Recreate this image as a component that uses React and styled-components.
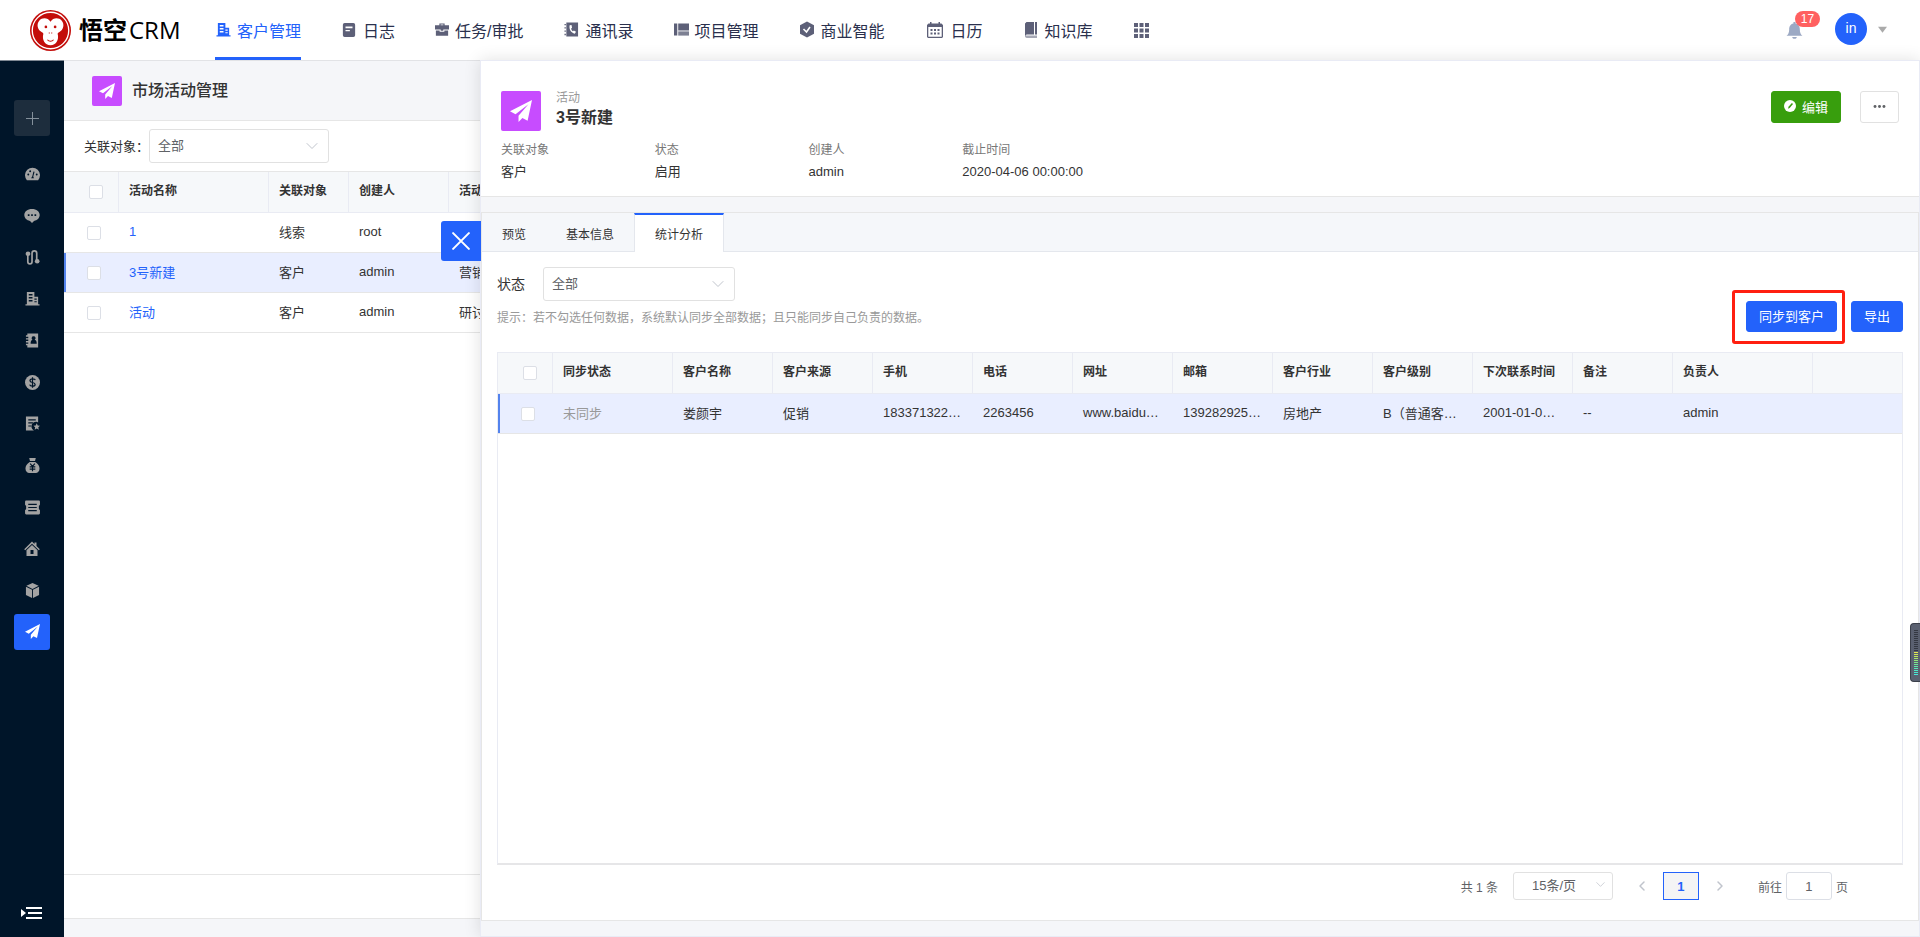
import React from 'react';
import styled, { createGlobalStyle } from 'styled-components';

const BLUE = '#2362fb';

const GlobalStyle = createGlobalStyle`
    * { box-sizing: border-box; }
    body {
        margin: 0;
        background: #f5f6f9;
        color: #333;
        font-family: "Liberation Sans", "Noto Sans CJK SC", sans-serif;
        font-size: 13px;
    }
    button, input, select { font-family: inherit; margin: 0; }
    button { cursor: pointer; }
    a { text-decoration: none; }
`;

const Page = styled.div`
    display: flex;
    flex-direction: column;
    height: 100vh;
    min-width: 1200px;
    position: relative;
    overflow: hidden;
`;

const TopBar = styled.header`
    flex: none;
    display: flex;
    align-items: stretch;
    height: 60px;
    padding: 0 33px 0 30px;
    background: #fff;
`;

const Brand = styled.a`
    display: flex;
    align-items: center;
    gap: 8px;
    width: 185px;
    color: #000;
    font-family: "Open Sans", "Noto Sans CJK SC", sans-serif;
    font-size: 24px;
    line-height: 58px;
    b {
        margin-right: 2px;
        font-weight: 700;
    }
`;

const MainNav = styled.nav`
    display: flex;
    gap: 40px;
    flex: 1;
`;

const NavLink = styled.a`
    display: flex;
    align-items: center;
    gap: 6px;
    color: ${props => props.$active ? BLUE : '#2a304d'};
    border-bottom: 3px solid ${props => props.$active ? BLUE : 'transparent'};
    padding-top: 2px;
    font-size: 16px;
    white-space: nowrap;
    svg { color: ${props => props.$active ? BLUE : '#5d6078'}; }
`;

const NavIcon = styled.span`
    display: flex;
    justify-content: center;
    width: ${props => props.$width}px;
`;

const UserArea = styled.div`
    display: flex;
    align-items: center;
`;

const BellButton = styled.button`
    position: relative;
    display: flex;
    padding: 0;
    border: 0;
    background: none;
    color: #9ca9c4;
    margin-right: 32px;
`;

const Badge = styled.span`
    position: absolute;
    left: 9px;
    bottom: 12px;
    min-width: 25px;
    height: 16px;
    border-radius: 8px;
    background: #ff6060;
    color: #fff;
    font-size: 12px;
    line-height: 16px;
    text-align: center;
`;

const Avatar = styled.button`
    display: flex;
    align-items: center;
    gap: 11px;
    padding: 0 0 2px;
    border: 0;
    background: none;
    color: #aaa;
    span {
        width: 32px;
        height: 32px;
        border-radius: 50%;
        background: ${BLUE};
        color: #fff;
        font-size: 14px;
        line-height: 31px;
    }
`;

const Body = styled.div`
    flex: 1;
    display: flex;
    min-height: 0;
    position: relative;
`;

const SideBar = styled.aside`
    flex: none;
    display: flex;
    flex-direction: column;
    align-items: center;
    width: 64px;
    background: #001529;
    border-top: 1px solid #808994;
    padding: 39px 0 17px;
`;

const AddButton = styled.button`
    display: flex;
    align-items: center;
    justify-content: center;
    width: 36px;
    height: 36px;
    border: 0;
    border-radius: 3px;
    background: #1d2d3d;
    color: #84909b;
    padding: 0;
`;

const SideNav = styled.nav`
    display: flex;
    flex-direction: column;
    justify-content: space-between;
    height: 494px;
    margin-top: 20px;
`;

const SideLink = styled.a`
    display: flex;
    align-items: center;
    justify-content: center;
    width: 36px;
    height: 36px;
    border-radius: 3px;
    color: ${props => props.$active ? '#fff' : '#a3a3a3'};
    background: ${props => props.$active ? BLUE : 'transparent'};
`;

const Collapse = styled.button`
    display: flex;
    margin-top: auto;
    padding: 0;
    border: 0;
    background: none;
    color: #fff;
`;

const ListPane = styled.main`
    flex: 1;
    min-width: 0;
    display: flex;
    flex-direction: column;
    border-top: 1px solid #e2e3e6;
`;

const ListHead = styled.div`
    display: flex;
    align-items: center;
    gap: 10px;
    height: 60px;
    padding: 0 28px;
    border-bottom: 1px solid #e6e6e6;
    h1 {
        margin: 0;
        padding-bottom: 4px;
        font-size: 16px;
        font-weight: 500;
    }
`;

const PlaneTile = styled.span`
    display: flex;
    align-items: center;
    justify-content: center;
    flex: none;
    width: ${props => props.$size}px;
    height: ${props => props.$size}px;
    border-radius: 2px;
    background: #c74cff;
    color: #fff;
`;

const FilterRow = styled.div`
    display: flex;
    align-items: center;
    gap: ${props => props.$gap}px;
    padding: ${props => props.$pad};
    font-size: ${props => props.$font}px;
    border-bottom: ${props => props.$line ? '1px solid #e6e6e6' : '0'};
    background: #fff;
    label { padding-bottom: 2px; }
`;

const SelectBox = styled.span`
    position: relative;
    display: inline-flex;
    width: ${props => props.$width}px;
    select {
        appearance: none;
        width: 100%;
        height: ${props => props.$height}px;
        padding: 0 30px 2px ${props => props.$indent}px;
        border: 1px solid #e1e1e1;
        border-radius: 3px;
        background: #fff;
        color: #606266;
        font-size: 13px;
    }
    svg {
        position: absolute;
        right: ${props => props.$arrowRight}px;
        top: calc(50% - 6px);
        color: #c0c4cc;
        pointer-events: none;
    }
`;

const ListTable = styled.div`
    flex: 1;
    background: #fff;
    overflow: hidden;
`;

const Footer = styled.div`
    height: 45px;
    margin-bottom: 18px;
    background: #fff;
    border: solid #e6e6e6;
    border-width: 1px 0;
`;

const Table = styled.table`
    width: 100%;
    table-layout: fixed;
    border-collapse: separate;
    border-spacing: 0;
`;

const Th = styled.th`
    height: 41px;
    padding: 0 10px 5px;
    border-right: 1px solid #e9ebf3;
    border-bottom: 1px solid #e9ebf3;
    background: #f6f8fa;
    font-size: 12px;
    font-weight: 700;
    text-align: left;
    white-space: nowrap;
    &:last-child { border-right: 0; }
`;

const Td = styled.td`
    height: 40px;
    padding: 0 10px 3px;
    border-bottom: 1px solid #e6e6e6;
    color: ${props => props.$muted ? '#999' : '#333'};
    font-size: 13px;
    white-space: nowrap;
    overflow: hidden;
    text-overflow: ellipsis;
    a { color: ${BLUE}; }
`;

const Tr = styled.tr`
    background: ${props => props.$selected ? '#e9eeff' : '#fff'};
    td:first-child {
        box-shadow: ${props => props.$selected ? 'inset 2px 0 0 #5383ed' : 'none'};
        padding-left: 23px;
    }
    th:first-child { padding-left: 25px; }
`;

const Check = styled.input.attrs({ type: 'checkbox' })`
    appearance: none;
    display: block;
    width: 14px;
    height: 14px;
    margin: 4px 0 0;
    border: 1px solid #dcdfe6;
    border-radius: 2px;
    background: #fff;
`;

const Drawer = styled.section`
    position: absolute;
    top: 0;
    right: 0;
    bottom: 0;
    width: 75%;
    display: flex;
    flex-direction: column;
    border: 1px solid #e9ebf5;
    background: #f5f6f9;
    box-shadow: 0 0 16px rgba(0, 0, 0, 0.12);
`;

const CloseButton = styled.button`
    position: absolute;
    top: 160px;
    left: -40px;
    display: flex;
    align-items: center;
    justify-content: center;
    width: 40px;
    height: 40px;
    border: 0;
    border-radius: 3px 0 0 3px;
    background: ${BLUE};
    color: #fff;
`;

const DetailHead = styled.div`
    padding: 30px 20px 14px;
    background: #fff;
    border-bottom: 1px solid #e6e6e6;
`;

const TitleRow = styled.div`
    display: flex;
    height: 40px;
`;

const Title = styled.div`
    flex: 1;
    padding-left: 15px;
    small {
        display: block;
        color: #999;
        font-size: 12px;
        line-height: 14px;
    }
    h2 {
        margin: 3px 0 0;
        font-size: 16px;
        line-height: 20px;
        font-weight: 700;
    }
`;

const Button = styled.button`
    display: inline-flex;
    align-items: center;
    justify-content: center;
    gap: 6px;
    height: ${props => props.$height || 32}px;
    padding: 0 12px 2px;
    border: 1px solid ${props => props.$line || props.$bg};
    border-radius: 3px;
    background: ${props => props.$bg};
    color: ${props => props.$color || '#fff'};
    font-size: 13px;
    white-space: nowrap;
`;

const Actions = styled.div`
    display: flex;
    gap: ${props => props.$gap}px;
`;

const Fields = styled.dl`
    display: flex;
    margin: 10px 0 0;
    div { width: 11%; min-width: 140px; }
    dt {
        color: #777;
        font-size: 12px;
        line-height: 18px;
    }
    dd {
        margin: 3px 0 0;
        font-size: 13px;
        line-height: 20px;
        white-space: nowrap;
    }
`;

const Card = styled.div`
    flex: 1;
    min-height: 0;
    display: flex;
    flex-direction: column;
    margin: 15px 0;
    border: 1px solid #e6e6e6;
    background: #fff;
`;

const Tabs = styled.div`
    display: flex;
    height: 39px;
    background: #f5f7fa;
    border-bottom: 1px solid #e4e7ed;
`;

const Tab = styled.button`
    height: 39px;
    padding: ${props => props.$active ? '0 20px' : '2px 20px 0'};
    border: solid #e4e7ed;
    border-width: ${props => props.$active ? '0 1px' : '0'};
    border-top: ${props => props.$active ? `2px solid ${BLUE}` : '0'};
    background: ${props => props.$active ? '#fff' : 'transparent'};
    color: #333;
    font-size: 12px;
`;

const CardBody = styled.div`
    flex: 1;
    min-height: 0;
    display: flex;
    flex-direction: column;
    padding: 0 15px;
`;

const HintRow = styled.div`
    display: flex;
    align-items: center;
    justify-content: space-between;
    margin-bottom: 20px;
    p {
        margin: 0;
        color: #999;
        font-size: 12px;
    }
`;

const Marked = styled.span`
    position: relative;
    display: inline-flex;
    &::after {
        content: '';
        position: absolute;
        inset: -11px -8px -12px -14px;
        border: 3px solid #ff1f10;
        border-radius: 3px;
        pointer-events: none;
    }
`;

const TableFrame = styled.div`
    flex: 1;
    min-height: 0;
    border: 1px solid #e9ebf3;
    border-bottom: 2px solid #e6e6e8;
    overflow: hidden;
`;

const Pager = styled.div`
    display: flex;
    align-items: center;
    justify-content: flex-end;
    height: 55px;
    padding: 0 55px 13px 0;
    color: #606266;
    font-size: 12px;
    label { margin: 0 4px 0 23px; }
    input {
        width: 46px;
        height: 28px;
        margin-right: 4px;
        border: 1px solid #dcdfe6;
        border-radius: 3px;
        color: #606266;
        font-size: 13px;
        text-align: center;
    }
`;

const PagerTotal = styled.span`
    margin-right: 15px;
`;

const PageArrow = styled.button`
    display: flex;
    align-items: center;
    justify-content: center;
    width: 30px;
    height: 28px;
    margin-left: ${props => props.$space || 0}px;
    padding: 0;
    border: 0;
    background: none;
    color: #c0c4cc;
`;

const PageNumber = styled.button`
    width: 36px;
    height: 28px;
    margin: 0 6px;
    border: 1px solid ${BLUE};
    background: #f4f4f5;
    color: ${BLUE};
    font-size: 13px;
    font-weight: 700;
`;

const Meter = styled.div`
    position: absolute;
    right: 0;
    top: 623px;
    width: 10px;
    height: 59px;
    padding: 6px 2px 6px 3px;
    border: 1px solid #3b3f4a;
    border-right: 0;
    border-radius: 4px 0 0 4px;
    background: #5a6070;
    display: flex;
    flex-direction: column;
    gap: 1px;
`;

const MeterBar = styled.i`
    flex: none;
    height: 1px;
    background: ${props => props.$color};
`;

const Icon = ({ size = 16, children, box = 16 }) => (
    <svg width={size} height={size} viewBox={`0 0 ${box} ${box}`} fill="currentColor" aria-hidden="true">
        {children}
    </svg>
);

const Stroke = ({ d, width = 1.2 }) => (
    <path d={d} fill="none" stroke="currentColor" strokeWidth={width} strokeLinecap="round" strokeLinejoin="round" />
);

const Plane = ({ size }) => (
    <Icon size={size}><path d="M16 0 0 8.2l4 2.1L13.4 3 6.200 11.400V16L9 13l3.800 2z" /></Icon>
);

const Building = ({ size }) => (
    <Icon size={size}>
        <path fillRule="evenodd" d="M2 1h8v5h4v8h1.500v1.500H.500V14H2zm2 2.300v1.400h4V3.300zm0 3.200v1.400h4V6.500zm0 3.200v1.400h4V9.700zM10 8v1.200h2.500V8zm0 2.800V12h2.500v-1.200z" />
    </Icon>
);

const Arrow = ({ size = 12 }) => <Icon size={size} box={12}><Stroke d="M1 3.500 6 8.500 11 3.500" width={1} /></Icon>;

const Logo = () => (
    <svg width="41" height="41" viewBox="0 0 40 40" aria-hidden="true">
        <circle cx="20" cy="20" r="20" fill="#c30d0a" />
        <circle cx="20" cy="20" r="17.800" fill="none" stroke="#fff" strokeWidth="1.300" />
        <path d="M20 11.500C17.500 7.500 12 7 9 10.500c-3 3.700-1.500 9 2.300 11 1 .5 1.700 1 1.700 2-1.500 5.500 1.500 11 7 11s8.500-5.500 7-11c0-1 .7-1.500 1.700-2 3.800-2 5.300-7.300 2.300-11-3-3.500-8.500-3-11 1z" fill="#fff" />
        <circle cx="15.500" cy="16.500" r="1.300" fill="#c30d0a" />
        <circle cx="24.500" cy="16.500" r="1.300" fill="#c30d0a" />
        <path d="M18.800 22v1M21.200 22v1M17 29c1.500 2 4.500 2 6 0" fill="none" stroke="#c30d0a" strokeWidth="1" />
    </svg>
);

const navItems = [
    { label: '客户管理', width: 16, active: true, icon: <Building size={15} /> },
    { label: '日志', width: 16, icon: <Icon size={14}><path fillRule="evenodd" d="M3 0h10a2 2 0 0 1 2 2v12a2 2 0 0 1-2 2H3a2 2 0 0 1-2-2V2a2 2 0 0 1 2-2zm1 4v2h8V4zm0 4v1.500h5V8z" /></Icon> },
    { label: '任务/审批', width: 14, icon: <Icon size={15}><path fillRule="evenodd" d="M5 3V1h6v2h5v5H9.500v1.500h-3V8H0V3zm1.400 0h3.200v-.8H6.400zM1 9.200h4.300v1.500h5.400V9.200H15V15H1z" /></Icon> },
    { label: '通讯录', width: 16, icon: <Icon size={15}><path fillRule="evenodd" d="M2.500.500H15v15H2.500zM6 3.500c-.8 4.500 1.500 8 5.500 9l1.300-2-2.300-1.500-1 .8C8.300 9 7.800 8 7.600 6.800l1-.8-.6-2.700zM.5 2H2v1.500H.500zm0 3.500H2V7H.500zM.500 9H2v1.500H.500zm0 3.500H2V14H.500z" /></Icon> },
    { label: '项目管理', width: 15, icon: <Icon size={15}><path d="M0 1.500h3.500v13H0zM4.500 1.500H16V9H4.500z" /><path d="M4.500 10H16v4.500H4.500z" opacity=".8" /></Icon> },
    { label: '商业智能', width: 16, icon: <Icon size={17}><path d="m8 0 7 3.800v8.400L8 16l-7-3.800V3.800z" /><path d="m4.500 7.500 3 3L11 5.500" fill="none" stroke="#fff" strokeWidth="1.600" /></Icon> },
    { label: '日历', width: 20, icon: <Icon size={16}><path fillRule="evenodd" d="M3 0h1.500v1.500h7V0H13v1.500h1.500L16 3v12l-1 1H1l-1-1V3l1.500-1.500H3zM1.300 5v9.700h13.400V5z" /><path d="M3.500 7h2v2h-2zM7 7h2v2H7zm3.500 0h2v2h-2zm-7 3.500h2v2h-2zm3.500 0h2v2H7zm3.500 0h2v2h-2z" /></Icon> },
    { label: '知识库', width: 16, icon: <Icon size={16}><path d="M3.500 0H11v12.500H3.500L2 14V1.500zM12 0h2v12.500h-2z" /><path d="M2 13.500h12V16H3.500L2 15z" opacity=".55" /></Icon> },
];

const sideItems = [
    { label: '仪表盘', icon: <Icon size={15}><path fillRule="evenodd" d="M2 14a8 8 0 1 1 12 0zm4.500-2h3L8.800 10l1.400-5-1.200-.3L7.800 9.800zM2.500 8a1 1 0 1 0 2 0 1 1 0 0 0-2 0zm9 0a1 1 0 1 0 2 0 1 1 0 0 0-2 0zM4.500 4.500a1 1 0 1 0 2 0 1 1 0 0 0-2 0z" /></Icon> },
    { label: '线索池', icon: <Icon size={16}><path fillRule="evenodd" d="M8 1c4.500 0 7.700 2.600 7.700 6 0 3-2.400 5.400-5.700 5.900L8 15l-2-2.100C2.700 12.400.3 10 .3 7 .3 3.600 3.500 1 8 1zM3.800 6.200v1.700h1.700V6.200zm3.400 0v1.700h1.600V6.200zm3.300 0v1.700h1.700V6.200z" /></Icon> },
    { label: '线索', icon: <Icon size={15}><circle cx="3.200" cy="4" r="2.500" /><circle cx="13" cy="12" r="2.500" /><Stroke d="M3 5v7.500a2 2 0 0 0 4.500 0V3.500a2.500 2.500 0 0 1 5 0V11" width={1.8} /></Icon> },
    { label: '客户', icon: <Building size={15} /> },
    { label: '联系人', icon: <Icon size={15}><path fillRule="evenodd" d="M2.500.5H14v15H2.500V13H1v-1.500h2.500V10H1V8.500h2.500V7H1V5.500h2.500V4H1V2.500h1.500zM9 3.500a2 2 0 0 0-1 3.700C6.500 7.800 6 9 6 11.500h6.500C12.500 9 12 7.800 10.300 7.200A2 2 0 0 0 9 3.500z" /></Icon> },
    { label: '商机', icon: <Icon size={15}><circle cx="8" cy="8" r="8" /><path d="M11 5.500C10.500 3.500 5.300 3.500 5.300 6c0 2.700 5.500 1.300 5.500 4 0 2.500-5.300 2.500-5.800.2M8 2.500v11" fill="none" stroke="#001529" strokeWidth="1.300" /></Icon> },
    { label: '合同', icon: <Icon size={15}><path fillRule="evenodd" d="M1 .5h13v6.300a4.800 4.800 0 0 0-4.500 8.700H1zM3.500 3.500v1.300h8V3.500zm0 3.200V8h5V6.700zm0 3.300v1.300h3V10z" /><path d="m12.500 7.800 1.100 2.300 2.400.3-1.800 1.700.5 2.500-2.200-1.200-2.200 1.200.5-2.500L9 10.400l2.400-.3z" /></Icon> },
    { label: '回款', icon: <Icon size={15}><path d="M4.500 0h7l-.8 3.300H5.300zM5 4.200h6c3 2 4.500 4.300 4.500 7 0 3-2 4.800-4 4.800h-7c-2 0-4-1.800-4-4.800 0-2.700 1.500-5 4.500-7z" /><path d="m5.500 6 2.500 3 2.500-3M8 9v5M5 9.500h6M5 11.800h6" fill="none" stroke="#001529" strokeWidth="1.200" /></Icon> },
    { label: '发票', icon: <Icon size={17}><path d="M2 1.500h12a1 1 0 0 1 1 1v3l-1 1v3l1 1v3a1 1 0 0 1-1 1H2a1 1 0 0 1-1-1v-3l1-1v-3l-1-1v-3a1 1 0 0 1 1-1z" /><path d="M4 5h8M4 8h8M4 11h8" stroke="#001529" strokeWidth="1.100" /></Icon> },
    { label: '公海', icon: <Icon size={16}><path d="M8 .5 10.500 3V1.500h2V5l3.300 3.200-1 1L8 2.800 1.200 9.200l-1-1z" /><path fillRule="evenodd" d="m8 4 5.500 5.200V15h-11V9.200zM6.500 9v4h3V9z" /></Icon> },
    { label: '产品', icon: <Icon size={15}><path d="M8 0l6.500 3L8 6.300 1.500 3zM1 4l6.500 3.300V16L1 12.700zM15 4 8.500 7.300V16l6.500-3.300z" /></Icon> },
    { label: '市场活动', active: true, icon: <Plane size={15} /> },
];

const activities = [
    { name: '1', target: '线索', creator: 'root', kind: '' },
    { name: '3号新建', target: '客户', creator: 'admin', kind: '营销', selected: true },
    { name: '活动', target: '客户', creator: 'admin', kind: '研讨' },
];

const details = [
    ['关联对象', '客户'],
    ['状态', '启用'],
    ['创建人', 'admin'],
    ['截止时间', '2020-04-06 00:00:00'],
];

const columns = [
    { title: '同步状态', width: 120, value: '未同步', muted: true },
    { title: '客户名称', width: 100, value: '娄颜宇' },
    { title: '客户来源', width: 100, value: '促销' },
    { title: '手机', width: 100, value: '183371322…' },
    { title: '电话', width: 100, value: '2263456' },
    { title: '网址', width: 100, value: 'www.baidu…' },
    { title: '邮箱', width: 100, value: '139282925…' },
    { title: '客户行业', width: 100, value: '房地产' },
    { title: '客户级别', width: 100, value: 'B（普通客…' },
    { title: '下次联系时间', width: 100, value: '2001-01-0…' },
    { title: '备注', width: 100, value: '--' },
    { title: '负责人', width: 140, value: 'admin' },
];

const meterColors = [
    ...Array(11).fill('#343842'),
    '#e6e84e', '#d2e854', '#bde85e', '#a6e86a', '#90e878', '#7ce888',
    '#6ce898', '#60e8a8', '#58e8b6', '#50e8c4', '#4ae8d0', '#46e8d8',
];

const Header = () => (
    <TopBar>
        <Brand href="#">
            <Logo />
            <span><b>悟空</b>CRM</span>
        </Brand>
        <MainNav>
            {navItems.map(({ label, icon, width, active }) => (
                <NavLink key={label} href="#" $active={active}>
                    <NavIcon $width={width}>{icon}</NavIcon>
                    {label}
                </NavLink>
            ))}
            <NavLink href="#" aria-label="更多">
                <Icon size={16}><path d="M1 1h4v4H1zM6.500 1h4v4h-4zM12 1h4v4h-4zM1 6.500h4v4H1zM6.500 6.500h4v4h-4zM12 6.500h4v4h-4zM1 12h4v4H1zM6.500 12h4v4h-4zM12 12h4v4h-4z" /></Icon>
            </NavLink>
        </MainNav>
        <UserArea>
            <BellButton aria-label="通知">
                <Icon size={17}><path d="M7 0h2v1.500c3 .5 4 3 4 5.500 0 3 .8 4.500 2.500 6H.500C2.200 11.500 3 10 3 7c0-2.500 1-5 4-5.500zM5.800 14h4.400c-.3 2.400-4.100 2.400-4.400 0z" /></Icon>
                <Badge>17</Badge>
            </BellButton>
            <Avatar>
                <span>in</span>
                <Icon size={9} box={10}><path d="M0 2h10L5 8.500z" /></Icon>
            </Avatar>
        </UserArea>
    </TopBar>
);

const Side = () => (
    <SideBar>
        <AddButton aria-label="新建"><Icon size={13} box={13}><Stroke d="M6.500 0v13M0 6.500h13" width={1} /></Icon></AddButton>
        <SideNav>
            {sideItems.map(({ label, icon, active }) => (
                <SideLink key={label} href="#" aria-label={label} $active={active}>{icon}</SideLink>
            ))}
        </SideNav>
        <Collapse aria-label="展开菜单">
            <svg width="22" height="14" viewBox="0 0 22 14" fill="currentColor" aria-hidden="true">
                <path d="M0 3l5 4-5 4zM5 1h16v2H5zM7 6h14v2H7zM5 11h16v2H5z" />
            </svg>
        </Collapse>
    </SideBar>
);

const ActivityList = () => (
    <ListPane>
        <ListHead>
            <PlaneTile $size={30}><Plane size={16} /></PlaneTile>
            <h1>市场活动管理</h1>
        </ListHead>
        <FilterRow $gap={0} $pad="8px 20px" $font={13} $line>
            <label htmlFor="target">关联对象：</label>
            <SelectBox $width={180} $height={34} $indent={8} $arrowRight={11}>
                <select id="target"><option>全部</option></select>
                <Arrow />
            </SelectBox>
        </FilterRow>
        <ListTable>
            <Table>
                <colgroup>
                    <col width="55" /><col width="150" /><col width="80" /><col width="100" /><col />
                </colgroup>
                <thead>
                    <Tr>
                        <Th><Check aria-label="全选活动" /></Th>
                        <Th>活动名称</Th>
                        <Th>关联对象</Th>
                        <Th>创建人</Th>
                        <Th>活动</Th>
                    </Tr>
                </thead>
                <tbody>
                    {activities.map((row) => (
                        <Tr key={row.name} $selected={row.selected}>
                            <Td><Check aria-label={row.name} /></Td>
                            <Td><a href="#">{row.name}</a></Td>
                            <Td>{row.target}</Td>
                            <Td>{row.creator}</Td>
                            <Td>{row.kind}</Td>
                        </Tr>
                    ))}
                </tbody>
            </Table>
        </ListTable>
        <Footer />
    </ListPane>
);

const Pagination = () => (
    <Pager>
        <PagerTotal>共 1 条</PagerTotal>
        <SelectBox $width={100} $height={28} $indent={18} $arrowRight={8}>
            <select aria-label="每页条数"><option>15条/页</option></select>
            <Arrow size={9} />
        </SelectBox>
        <PageArrow aria-label="上一页" $space={14}><Icon size={12} box={12}><Stroke d="M8 2 4 6l4 4" width={1.5} /></Icon></PageArrow>
        <PageNumber>1</PageNumber>
        <PageArrow aria-label="下一页"><Icon size={12} box={12}><Stroke d="M4 2l4 4-4 4" width={1.5} /></Icon></PageArrow>
        <label htmlFor="goto">前往</label>
        <input id="goto" type="text" defaultValue="1" />
        页
    </Pager>
);

const DetailDrawer = () => (
    <Drawer>
        <CloseButton aria-label="关闭"><Icon size={18}><Stroke d="M1 1l14 14M15 1 1 15" width={1.8} /></Icon></CloseButton>
        <DetailHead>
            <TitleRow>
                <PlaneTile $size={40}><Plane size={22} /></PlaneTile>
                <Title>
                    <small>活动</small>
                    <h2>3号新建</h2>
                </Title>
                <Actions $gap={19}>
                    <Button $bg="#389e0d">
                        <Icon size={12}><circle cx="8" cy="8" r="8" /><path d="M5.500 11.500 6 9l4.500-5 1.500 1.300L7.500 10.500z" fill="#389e0d" /></Icon>
                        编辑
                    </Button>
                    <Button $bg="#fff" $line="#e1e1e1" $color="#606266" aria-label="更多操作">
                        <Icon size={13}><circle cx="2.500" cy="8" r="1.800" /><circle cx="8" cy="8" r="1.800" /><circle cx="13.500" cy="8" r="1.800" /></Icon>
                    </Button>
                </Actions>
            </TitleRow>
            <Fields>
                {details.map(([name, value]) => (
                    <div key={name}>
                        <dt>{name}</dt>
                        <dd>{value}</dd>
                    </div>
                ))}
            </Fields>
        </DetailHead>
        <Card>
            <Tabs role="tablist">
                <Tab role="tab">预览</Tab>
                <Tab role="tab">基本信息</Tab>
                <Tab role="tab" aria-selected="true" $active>统计分析</Tab>
            </Tabs>
            <CardBody>
                <FilterRow $gap={18} $pad="15px 0 0" $font={14}>
                    <label htmlFor="status">状态</label>
                    <SelectBox $width={192} $height={34} $indent={8} $arrowRight={11}>
                        <select id="status"><option>全部</option></select>
                        <Arrow />
                    </SelectBox>
                </FilterRow>
                <HintRow>
                    <p>提示：若不勾选任何数据，系统默认同步全部数据；且只能同步自己负责的数据。</p>
                    <Actions $gap={14}>
                        <Marked><Button $bg={BLUE} $height={31}>同步到客户</Button></Marked>
                        <Button $bg={BLUE} $height={31}>导出</Button>
                    </Actions>
                </HintRow>
                <TableFrame>
                    <Table>
                        <colgroup>
                            <col width="55" />
                            {columns.map(({ title, width }) => <col key={title} width={width} />)}
                            <col />
                        </colgroup>
                        <thead>
                            <Tr>
                                <Th><Check aria-label="全选客户" /></Th>
                                {columns.map(({ title }) => <Th key={title}>{title}</Th>)}
                                <Th />
                            </Tr>
                        </thead>
                        <tbody>
                            <Tr $selected>
                                <Td><Check aria-label="娄颜宇" /></Td>
                                {columns.map(({ title, value, muted }) => <Td key={title} $muted={muted}>{value}</Td>)}
                                <Td />
                            </Tr>
                        </tbody>
                    </Table>
                </TableFrame>
                <Pagination />
            </CardBody>
        </Card>
    </Drawer>
);

const App = () => (
    <>
        <GlobalStyle />
        <Page>
            <Header />
            <Body>
                <Side />
                <ActivityList />
                <DetailDrawer />
            </Body>
            <Meter aria-hidden="true">
                {meterColors.map((color, i) => <MeterBar key={i} $color={color} />)}
            </Meter>
        </Page>
    </>
);

export default App;
